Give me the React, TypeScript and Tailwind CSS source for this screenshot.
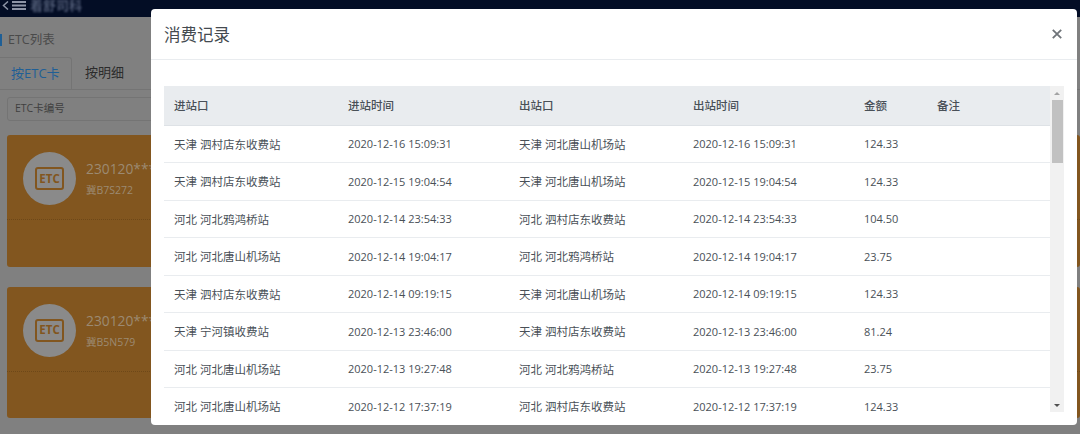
import React from "react";

const rows = [
  ["天津 泗村店东收费站", "2020-12-16 15:09:31", "天津 河北唐山机场站", "124.33"],
  ["天津 泗村店东收费站", "2020-12-15 19:04:54", "天津 河北唐山机场站", "124.33"],
  ["河北 河北鸦鸿桥站", "2020-12-14 23:54:33", "河北 泗村店东收费站", "104.50"],
  ["河北 河北唐山机场站", "2020-12-14 19:04:17", "河北 河北鸦鸿桥站", "23.75"],
  ["天津 泗村店东收费站", "2020-12-14 09:19:15", "天津 河北唐山机场站", "124.33"],
  ["天津 宁河镇收费站", "2020-12-13 23:46:00", "天津 泗村店东收费站", "81.24"],
  ["河北 河北唐山机场站", "2020-12-13 19:27:48", "河北 河北鸦鸿桥站", "23.75"],
  ["河北 河北唐山机场站", "2020-12-12 17:37:19", "河北 泗村店东收费站", "124.33"],
];

const EtcCard = ({ plate }: { plate: string }) => (
  <div className="h-[131.5px] w-[1073px] rounded-[3px] bg-[#82561f] shrink-0">
    <div className="h-[85px] flex items-start pl-[16px] pt-[17px] border-b border-dotted border-[#6e4818]">
      <div className="w-[53px] h-[53px] rounded-full bg-[#8a8a8a] flex items-center justify-center">
        <div className="w-[29px] h-[23px] rounded-[3px] border-2 border-[#82561f] flex items-center justify-center text-[11.5px] leading-none font-bold text-[#82561f]">
          ETC
        </div>
      </div>
      <div className="ml-[10px] mt-[7px] text-[#9c8a72]">
        <div className="text-[13.8px] leading-[20px]">230120***</div>
        <div className="text-[10.5px] leading-[16px] mt-[3px]">{plate}</div>
      </div>
    </div>
  </div>
);

const Scrollbar = () => (
  <div className="w-[14px] h-full bg-[#f1f1f1] flex flex-col items-center shrink-0">
    <div className="h-[14px] flex items-center justify-center">
      <div className="w-0 h-0 border-x-[3px] border-x-transparent border-b-[3px] border-b-[#a3a3a3]" />
    </div>
    <div className="w-[11px] h-[63px] bg-[#c1c1c1]" />
    <div className="flex-1" />
    <div className="h-[14px] flex items-center justify-center">
      <div className="w-0 h-0 border-x-[3px] border-x-transparent border-t-[3px] border-t-[#505050]" />
    </div>
  </div>
);

export default function App() {
  return (
    <div
      className="relative w-[1080px] h-[434px] overflow-hidden bg-[#808080]"
      style={{ fontFamily: '"Open Sans", "Noto Sans CJK SC", sans-serif' }}
    >
      {/* dimmed page behind the modal */}
      <div className="h-[17px] bg-[#030d25] flex items-start pl-[2px] pt-[1px] gap-[3px] text-[#4f5a74] overflow-hidden">
        <svg className="blur-[0.5px]" width="7" height="9" viewBox="0 0 7 9" fill="none" stroke="#8d94a6" strokeWidth="1.5">
          <path d="M6 0.5 1.5 4.5 6 8.5" />
        </svg>
        <svg className="blur-[0.5px]" width="14" height="9" viewBox="0 0 14 9" fill="#8d94a6">
          <rect x="0" y="0" width="14" height="2" />
          <rect x="0" y="3.5" width="14" height="2" />
          <rect x="0" y="7" width="14" height="2" />
        </svg>
        <span className="text-[13px] leading-[9px] font-bold blur-[1px] ml-[1px]">着舒司科</span>
      </div>
      <div className="flex items-center h-[14px] mt-[16px] text-[12.5px] text-[#4a4a4a]">
        <div className="w-[2px] h-[12px] bg-[#1f5f96] mr-[6px]" />
        ETC列表
      </div>
      <div className="flex h-[33px] mt-[10px] border-b border-[#747474] text-[13px]">
        <div className="w-[72px] rounded-tr-[3px] border-t border-r border-[#747474] flex items-center pl-[11px] text-[#1f5f96]">
          按ETC卡
        </div>
        <div className="w-[48px] ml-[13px] flex items-center text-[#2c2c2c]">按明细</div>
      </div>
      <div className="ml-[7px] mt-[7px] h-[24px] w-[300px] rounded-[3px] border border-[#747474] flex items-center pl-[7px] text-[10.5px] text-[#3f3f3f]">
        ETC卡编号
      </div>
      <div className="ml-[7px] mt-[14px] flex flex-col gap-[20px]">
        <EtcCard plate="冀B7S272" />
        <EtcCard plate="冀B5N579" />
      </div>

      {/* modal */}
      <div className="absolute left-[151px] top-[9px] w-[926px] h-[416px] bg-white rounded-[4px] flex flex-col">
        <div className="h-[51px] shrink-0 border-b border-[#e9ecef] flex items-center justify-between pl-[13px] pr-[15px]">
          <span className="text-[16.5px] text-[#444a50] mt-[3px]">消费记录</span>
          <svg width="10" height="10" viewBox="0 0 10 10" stroke="#6f7479" strokeWidth="1.8" fill="none">
            <path d="M0.8 0.8 9.2 9.2M9.2 0.8 0.8 9.2" />
          </svg>
        </div>
        <div className="flex h-[326px] mt-[26px] ml-[13px] w-[900px]">
          <div className="w-[886px] overflow-hidden">
            <table className="w-[886px] table-fixed border-collapse text-[11px] text-[#495057]">
              <thead>
                <tr className="h-[39px] bg-[#e9ecef] border-b border-[#dee2e6] text-left text-[11.5px]">
                  <th className="w-[174px] pl-[10px] pt-[1px] font-medium">进站口</th>
                  <th className="w-[171px] pl-[10px] pt-[1px] font-medium">进站时间</th>
                  <th className="w-[174px] pl-[10px] pt-[1px] font-medium">出站口</th>
                  <th className="w-[171px] pl-[10px] pt-[1px] font-medium">出站时间</th>
                  <th className="w-[73px] pl-[10px] pt-[1px] font-medium">金额</th>
                  <th className="pl-[10px] pt-[1px] font-medium">备注</th>
                </tr>
              </thead>
              <tbody>
                {rows.map((r, idx) => (
                  <tr key={idx} className="h-[37.5px] border-b border-[#e9ecef]">
                    <td className="pl-[10px] pt-[1px] text-[11.5px]">{r[0]}</td>
                    <td className="pl-[10px] pt-[1px]">{r[1]}</td>
                    <td className="pl-[10px] pt-[1px] text-[11.5px]">{r[2]}</td>
                    <td className="pl-[10px] pt-[1px]">{r[1]}</td>
                    <td className="pl-[10px] pt-[1px]">{r[3]}</td>
                    <td className="pl-[10px]"></td>
                  </tr>
                ))}
              </tbody>
            </table>
          </div>
          <Scrollbar />
        </div>
      </div>
    </div>
  );
}
